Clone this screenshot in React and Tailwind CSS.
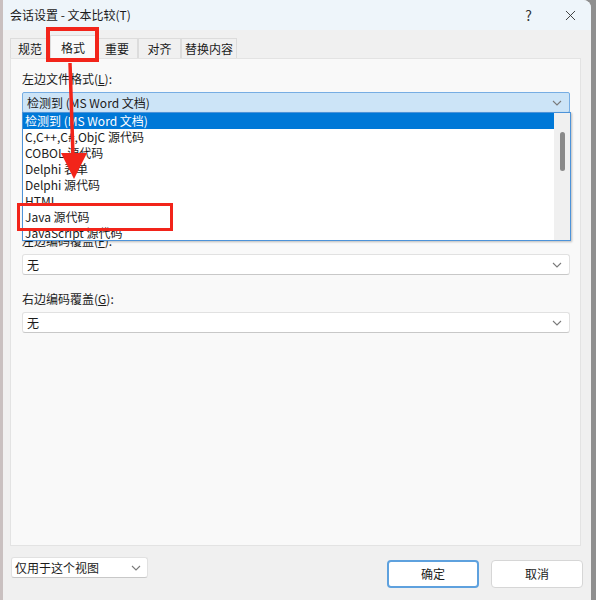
import React from "react"
import { X } from "lucide-react"

const font = { fontFamily: '"Noto Sans CJK SC", "Noto Sans", sans-serif' }

const Chevron = ({ className = "" }) => (
  <svg width="10" height="6" viewBox="0 0 10 6" className={className}>
    <path d="M1 1 L5 5 L9 1" fill="none" stroke="#7a7a7a" strokeWidth="1.1" />
  </svg>
)

const Label = ({ text, hotkey, className = "" }) => (
  <div className={`h-[16px] leading-[16px] text-[12px] text-[#1b1b1b] ${className}`}>
    {text}(<span className="underline">{hotkey}</span>):
  </div>
)

const Combo = ({ value }) => (
  <div className="mt-[5px] h-[21px] flex items-center justify-between px-[4px] bg-white border border-[#e1e1e1] border-b-[#c8c8c8] rounded-[3px] text-[12px] text-[#1b1b1b]">
    <span>{value}</span>
    <Chevron className="mr-[3px]" />
  </div>
)

const listItems = [
  "检测到 (MS Word 文档)",
  "C,C++,C#,ObjC 源代码",
  "COBOL 源代码",
  "Delphi 表单",
  "Delphi 源代码",
  "HTML",
  "Java 源代码",
  "JavaScript 源代码",
]

const tabs = [
  { name: "规范", w: "w-[40px]" },
  { name: "格式", w: "w-[46px]", active: true },
  { name: "重要", w: "w-[42px]" },
  { name: "对齐", w: "w-[43px]" },
  { name: "替换内容", w: "w-[56px]" },
]

export default function App() {
  return (
    <div className="relative w-[596px] h-[600px] flex bg-[#8f8f8f] overflow-hidden" style={font}>
      {/* dialog */}
      <div className="w-[591px] h-full flex flex-col bg-[#f0f0f0] rounded-tr-[8px] border-l-[3px] border-l-[#c9c0c0]">
        {/* title bar */}
        <div className="h-[30px] flex items-center justify-between pl-[7px] pr-[12px] bg-[#eef5fa] rounded-tr-[8px]">
          <span className="text-[12px] text-[#1b1b1b]">会话设置 - 文本比较(T)</span>
          <div className="flex items-center gap-[30px]">
            <span className="text-[14px] text-[#333]">?</span>
            <X size={17} strokeWidth={1.3} color="#333" />
          </div>
        </div>

        {/* tabs */}
        <div className="h-[28px] flex items-end px-[7px]">
          {tabs.map((t) =>
            t.active ? (
              <div
                key={t.name}
                className={`${t.w} h-[24px] flex items-center justify-center bg-[#f9f9f9] border border-b-0 border-[#dcdcdc] text-[12px] text-[#1b1b1b] -mb-[1px] relative z-10`}
              >
                {t.name}
              </div>
            ) : (
              <div
                key={t.name}
                className={`${t.w} h-[20px] flex items-center justify-center bg-[#f0f0f0] border border-b-0 border-[#dcdcdc] text-[12px] text-[#1b1b1b]`}
              >
                {t.name}
              </div>
            )
          )}
        </div>

        {/* panel */}
        <div className="ml-[7px] mr-[10px] h-[488px] bg-[#f9f9f9] border border-[#e3e3e3] pt-[12px] pl-[11px] pr-[10px]">
          <Label text="左边文件格式" hotkey="L" />
          <div className="relative">
            <div className="mt-[5px] h-[21px] flex items-center justify-between px-[4px] bg-[#cce4f7] border border-[#76ade3] rounded-[2px] text-[12px] text-[#1b1b1b]">
              <span>检测到 (MS Word 文档)</span>
              <Chevron className="mr-[3px]" />
            </div>
            {/* open dropdown list */}
            <div className="absolute left-0 right-[-1px] top-[20px] h-[129px] bg-white border border-[#4d93d9] overflow-hidden flex z-20 shadow-[1px_1px_2px_rgba(0,0,0,0.25)]">
              <div className="flex-1 flex flex-col">
                {listItems.map((item, i) => (
                  <div
                    key={item}
                    className={`h-[16px] shrink-0 leading-[16px] px-[2px] text-[12px] ${
                      i === 0 ? "bg-[#0078d7] text-white" : "text-[#1b1b1b]"
                    }`}
                  >
                    {item}
                  </div>
                ))}
              </div>
              <div className="w-[16px] bg-[#f0f0f0] flex justify-center pt-[19px]">
                <div className="w-[5px] h-[39px] rounded-full bg-[#8a8a8a]" />
              </div>
            </div>
          </div>

          <Label text="左边编码覆盖" hotkey="F" className="mt-[120px]" />
          <Combo value="无" />

          <Label text="右边编码覆盖" hotkey="G" className="mt-[16px]" />
          <Combo value="无" />
        </div>

        {/* bottom row */}
        <div className="flex items-start justify-between pl-[8px] pr-[8px] pt-[10px]">
          <div className="mt-[1px] w-[137px] h-[21px] flex items-center justify-between px-[3px] bg-white border border-[#e1e1e1] border-b-[#c8c8c8] rounded-[3px] text-[12px] text-[#1b1b1b]">
            <span>仅用于这个视图</span>
            <Chevron className="mr-[3px]" />
          </div>
          <div className="flex gap-[12px] mt-[4px]">
            <button className="w-[92px] h-[28px] bg-white border-2 border-[#5ea1de] rounded-[4px] text-[12px] text-[#1b1b1b]">
              确定
            </button>
            <button className="w-[92px] h-[28px] bg-white border border-[#d6d6d6] rounded-[4px] text-[12px] text-[#1b1b1b]">
              取消
            </button>
          </div>
        </div>
      </div>
      <div className="flex-1" />

      {/* red annotations */}
      <div className="absolute left-[46px] top-[27px] w-[53px] h-[35px] border-[4px] border-[#f2241a] z-30" />
      <div className="absolute left-[17px] top-[203px] w-[156px] h-[28px] border-[3px] border-[#f2241a] z-30" />
      <svg className="absolute left-0 top-0 z-30" width="120" height="200" viewBox="0 0 120 200">
        <path d="M70 63 L73 156" stroke="#f2241a" strokeWidth="3.5" fill="none" />
        <polygon points="61,153 87,153 74,179" fill="#f2241a" />
      </svg>
    </div>
  )
}
